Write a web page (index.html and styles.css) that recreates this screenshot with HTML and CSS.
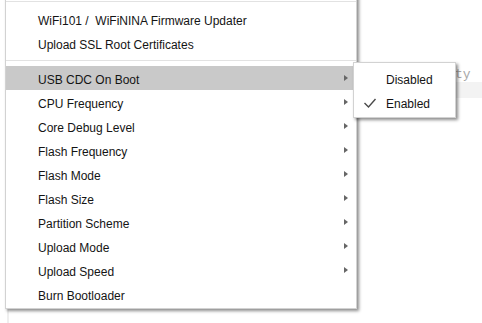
FILE: index.html
```html
<!DOCTYPE html>
<html lang="en">
<head>
    <meta charset="UTF-8">
    <meta name="viewport" content="width=device-width, initial-scale=1.0">
    <title>Tools Menu</title>
    <link rel="stylesheet" href="styles.css">
</head>
<body>

    <!-- editor behind the menu -->
    <div class="editor">
        <div class="code-line">ty</div>
        <div class="code-line current"></div>
    </div>

    <!-- Tools menu (top is cut off by the window) -->
    <div class="menu">
        <div class="sep"></div>
        <div class="item">WiFi101 /&nbsp; WiFiNINA Firmware Updater</div>
        <div class="item">Upload SSL Root Certificates</div>
        <div class="sep"></div>
        <div class="item sub active">USB CDC On Boot
            <div class="submenu">
                <div class="item">Disabled</div>
                <div class="item checked">
                    <svg class="check" width="14" height="12" viewBox="0 0 14 12">
                        <polyline points="1.5,6 5.5,10 12.5,2" fill="none" stroke="#4a4a4a" stroke-width="1.4"/>
                    </svg>
                    Enabled
                </div>
            </div>
        </div>
        <div class="item sub">CPU Frequency</div>
        <div class="item sub">Core Debug Level</div>
        <div class="item sub">Flash Frequency</div>
        <div class="item sub">Flash Mode</div>
        <div class="item sub">Flash Size</div>
        <div class="item sub">Partition Scheme</div>
        <div class="item sub">Upload Mode</div>
        <div class="item sub">Upload Speed</div>
        <div class="item">Burn Bootloader</div>
    </div>

</body>
</html>
```

FILE: styles.css
```css
body {
    margin: 0;
    padding: 0;
    background-color: white;
    font-family: 'Liberation Sans', Arial, sans-serif;
    font-size: 12px;
    color: #141414;
    overflow: hidden;
}

/* editor in the background */
.editor {
    margin-left: 7px;
    height: 100vh;
    border-left: 2px solid #efefef;
    padding-top: 66px;
    box-sizing: border-box;
}

.code-line {
    height: 16px;
    line-height: 17px;
    padding-left: 446px;
    font-family: 'Liberation Mono', monospace;
    font-size: 13px;
    color: #a8a8a8;
}

.code-line.current {
    background-color: #f3f3f3;
}

/* popup menu */
.menu {
    position: absolute;
    top: -5px;
    left: 5px;
    width: 352px;
    box-sizing: border-box;
    padding-bottom: 2px;
    background-color: white;
    border: 1px solid #d2d2d2;
    box-shadow: 2px 2px 3px rgba(0, 0, 0, 0.45);
}

.sep {
    height: 1px;
    margin: 5px 0;
    background-color: #e2e2e2;
}

.item {
    position: relative;
    height: 24px;
    box-sizing: border-box;
    padding-top: 4px;
    padding-left: 32px;
    line-height: 20px;
    white-space: nowrap;
}

.item.active {
    background-color: #c9c9c9;
}

/* small arrow for items with a submenu */
.item.sub::after {
    content: "";
    position: absolute;
    top: 9px;
    right: 8px;
    border-left: 4px solid #666;
    border-top: 3.5px solid transparent;
    border-bottom: 3.5px solid transparent;
}

.submenu {
    position: absolute;
    top: -4px;
    left: 347px;
    width: 103px;
    box-sizing: border-box;
    padding: 3px 0;
    background-color: white;
    border: 1px solid #d2d2d2;
    box-shadow: 2px 2px 3px rgba(0, 0, 0, 0.45);
}

.submenu .item {
    padding-left: 32px;
}

.check {
    position: absolute;
    left: 9px;
    top: 7px;
}
```
